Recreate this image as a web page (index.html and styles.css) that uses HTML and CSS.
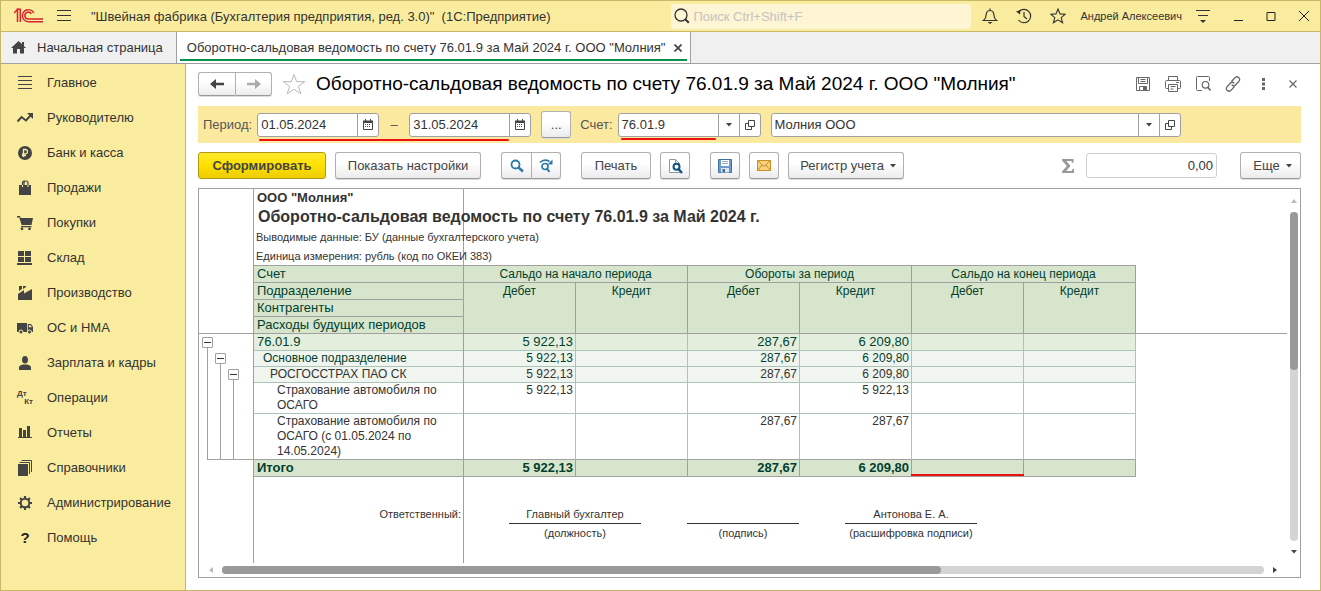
FILE: index.html
```html
<!DOCTYPE html>
<html lang="ru">
<head>
<meta charset="utf-8">
<title>Оборотно-сальдовая ведомость по счету 76.01.9</title>
<link rel="stylesheet" href="styles.css">
</head>
<body>
<svg class="defs" width="0" height="0" aria-hidden="true">
  <symbol id="calendar" viewBox="0 0 10 11"><path d="M.5 2v8.500h9V2M2.500 0v2M7.500 0v2" fill="none" stroke="#444"/><path d="M0 1.500h10V4H0z" fill="#444"/><path d="M2 5.500h6M2 7.500h6" stroke="#444" stroke-dasharray="1 1"/></symbol>
  <symbol id="open" viewBox="0 0 10 10"><path d="M3.500.5h6v6h-6zM3.500 3.500h-3v6h6v-3" fill="none" stroke="#444"/></symbol>
  <symbol id="caret" viewBox="0 0 6 4"><path d="M0 0h6L3 3.500z" fill="#444"/></symbol>
</svg>
<div class="window">
  <header class="titlebar">
    <svg class="logo" width="30" height="16" viewBox="0 0 30 16"><g fill="none" stroke="#d8232a" stroke-width="1.500"><path d="M0 5l3.500-3.500v12.500M2.500 1.200h3.800V14"/><path d="M19.800 5A6 6 0 1 0 14.500 13.700H29"/><path d="M17.300 6A3.400 3.400 0 1 0 14.500 11H29"/></g></svg>
    <button class="plain" aria-label="Меню"><svg width="14" height="12" viewBox="0 0 14 12"><path d="M0 .5h14M0 5.500h14M0 10.500h14" stroke="#333"/></svg></button>
    <span class="app-name">"Швейная фабрика (Бухгалтерия предприятия, ред. 3.0)"&nbsp; (1С:Предприятие)</span>
    <label class="search"><svg width="16" height="16" viewBox="0 0 16 16"><circle cx="7" cy="7" r="6" fill="none" stroke="#333" stroke-width="1.300"/><path d="M11.200 11.200l3.600 3.600" stroke="#333" stroke-width="2"/></svg><input type="text" aria-label="Поиск" placeholder="Поиск Ctrl+Shift+F"></label>
    <div class="title-tools">
      <button class="plain" aria-label="Оповещения"><svg width="16" height="16" viewBox="0 0 16 16"><path d="M1.500 12.500h13C12.500 11 12 9.500 11.800 6.500 11.600 3.800 10 2.500 8 2.500S4.400 3.800 4.200 6.500C4 9.500 3.500 11 1.500 12.500zM8 .5v2" fill="none" stroke="#333" stroke-width="1.200"/><path d="M5.500 14h5L8 16z" fill="#333"/></svg></button>
      <button class="plain" aria-label="История"><svg width="16" height="16" viewBox="0 0 16 16"><path d="M3 3.500A6.700 6.700 0 1 1 2.500 12M8 4v4.500l3 2.500" fill="none" stroke="#333" stroke-width="1.200"/><path d="M0 3.500l4.500-1.500-.5 4.500z" fill="#333"/></svg></button>
      <button class="plain" aria-label="Избранное"><svg width="16" height="16" viewBox="0 0 16 16"><path d="M8 1l2 4.900 5.300.3-4.100 3.400 1.400 5.200L8 11.900l-4.600 2.900 1.400-5.200L.7 6.200 6 5.900z" fill="none" stroke="#333" stroke-width="1.100"/></svg></button>
      <span class="user">Андрей Алексеевич</span>
      <button class="plain" aria-label="Настройки панели"><svg width="14" height="13" viewBox="0 0 14 13"><path d="M0 .5h14M2 5.500h10" stroke="#333"/><path d="M4 10h6l-3 3z" fill="#333"/></svg></button>
      <button class="plain win" aria-label="Свернуть"><svg width="10" height="10" viewBox="0 0 10 10"><path d="M1 9.500h9" stroke="#222"/></svg></button>
      <button class="plain win" aria-label="Развернуть"><svg width="10" height="10" viewBox="0 0 10 10"><path d="M1 1.500h8v8H1z" fill="none" stroke="#222"/></svg></button>
      <button class="plain win" aria-label="Закрыть"><svg width="10" height="10" viewBox="0 0 10 10"><path d="M0 0l10 10M10 0L0 10" stroke="#222"/></svg></button>
    </div>
  </header>
  <nav class="tabs">
    <a class="tab home" href="#"><svg width="15" height="13" viewBox="0 0 15 13"><path d="M7.500 0L11 3V1h2v4l2 2h-2v5.500H9V8H6v4.500H2V7H0z" fill="#444"/></svg>Начальная страница</a>
    <div class="tab active"><a href="#">Оборотно-сальдовая ведомость по счету 76.01.9 за Май 2024 г. ООО "Молния"</a><button class="plain" aria-label="Закрыть вкладку"><svg width="8" height="8" viewBox="0 0 8 8"><path d="M.5.5l7 7M7.500.5l-7 7" stroke="#444" stroke-width="1.700"/></svg></button></div>
  </nav>
  <div class="body">
    <nav class="sidebar">
      <a href="#"><svg viewBox="0 0 16 16"><path d="M1 1.500h14M1 5.500h14M1 9.500h14M1 13.500h14" stroke="#444"/></svg>Главное</a>
      <a href="#"><svg viewBox="0 0 16 16"><path d="M.5 11.500l4-4.500 4.500 3.500 5-5.500" fill="none" stroke="#444" stroke-width="2"/><path d="M10 3h6v6z" fill="#444"/></svg>Руководителю</a>
      <a href="#"><svg viewBox="0 0 16 16"><circle cx="8" cy="8" r="7" fill="#444"/><path d="M6.500 12V4.500h2.300a2.200 2.200 0 0 1 0 4.300H5M5 10.500h4" fill="none" stroke="#faec9e" stroke-width="1.300"/></svg>Банк и касса</a>
      <a href="#"><svg viewBox="0 0 16 16"><path d="M2 5h12v10H2z" fill="#444"/><path d="M5.500 5V3a1.800 1.800 0 0 1 3-1.500M7 5V3a2 2 0 0 1 4 0v2" fill="none" stroke="#444" stroke-width="1.200"/><path d="M5.500 5v2M11 5v2" stroke="#faec9e"/></svg>Продажи</a>
      <a href="#"><svg viewBox="0 0 16 16"><path d="M0 1h3l.6 2H16l-1.500 7H4.600L2.300 2.500H0zM4 11h10.500v1.200H4z" fill="#444"/><circle cx="5" cy="13.800" r="1.400" fill="#444"/><circle cx="12.500" cy="13.800" r="1.400" fill="#444"/></svg>Покупки</a>
      <a href="#"><svg viewBox="0 0 16 16"><path d="M1 1h6v5H1zM8 1h6v5H8zM1 7h6v5H1zM8 7h6v5H8zM0 13h15v2H0z" fill="#444"/></svg>Склад</a>
      <a href="#"><svg viewBox="0 0 16 16"><path d="M1 15V9l6-4v3.500L15 4v11zM2 1h3v3L2 6zM6 1h3v1L6 4z" fill="#444"/></svg>Производство</a>
      <a href="#"><svg viewBox="0 0 16 16"><path d="M0 3h10v9H0zM10.800 4H14l2 3v5h-5.200z" fill="#444"/><path d="M11.800 5.200h2l1 2h-3z" fill="#faec9e"/><circle cx="4" cy="12" r="2" fill="#444" stroke="#faec9e"/><circle cx="12.500" cy="12" r="2" fill="#444" stroke="#faec9e"/></svg>ОС и НМА</a>
      <a href="#"><svg viewBox="0 0 16 16"><ellipse cx="8" cy="4.800" rx="3" ry="3.800" fill="#444"/><path d="M2 15v-2.500C2 10.500 4 10 6 9.500h4c2 .5 4 1 4 3V15z" fill="#444"/></svg>Зарплата и кадры</a>
      <a href="#"><span class="dtkt" aria-hidden="true"><b>Дт</b><b>Кт</b></span>Операции</a>
      <a href="#"><svg viewBox="0 0 16 16"><path d="M2 3h3v9H2zM6 5h3v7H6zM10 1h3v11h-3zM1 12h14v1H1z" fill="#444"/></svg>Отчеты</a>
      <a href="#"><svg viewBox="0 0 16 16"><path d="M1 4h10v12H1z" fill="#444"/><path d="M2.500 2.500h10V14M4.500.5h10V12" fill="none" stroke="#444"/></svg>Справочники</a>
      <a href="#"><svg viewBox="0 0 16 16"><circle cx="8" cy="8" r="4.300" fill="none" stroke="#444" stroke-width="2"/><path d="M8 1v2.500M8 12.500V15M1 8h2.500M12.500 8H15M3.100 3.100l1.700 1.700M11.200 11.200l1.700 1.700M3.100 12.900l1.700-1.700M11.200 4.800l1.700-1.700" stroke="#444" stroke-width="2.200"/></svg>Администрирование</a>
      <a href="#"><span class="help" aria-hidden="true">?</span>Помощь</a>
    </nav>
    <main class="content">
      <div class="heading">
        <div class="btn-group nav"><button class="btn" aria-label="Назад"><svg width="14" height="10" viewBox="0 0 14 10"><path d="M0 5l6-5v3.700h8v2.600H6V10z" fill="#444"/></svg></button><button class="btn" aria-label="Вперед"><svg width="14" height="10" viewBox="0 0 14 10"><path d="M14 5L8 0v3.700H0v2.600h8V10z" fill="#aaa"/></svg></button></div>
        <button class="plain" aria-label="В избранное"><svg width="24" height="22" viewBox="0 0 24 22"><path d="M12 1.500l2.700 7.200h8l-6.300 4.700 2.400 7.400L12 16.300l-6.800 4.500 2.400-7.400L1.300 8.700h8z" fill="none" stroke="#b4b9c0"/></svg></button>
        <h1>Оборотно-сальдовая ведомость по счету 76.01.9 за Май 2024 г. ООО "Молния"</h1>
        <div class="head-tools">
          <button class="plain" aria-label="Сохранить"><svg width="16" height="16" viewBox="0 0 16 16"><path d="M1.500 1.500h13v13h-13zM3.500 1.500v6h9v-6M5.500 3.500h5M5.500 5.500h5M4.500 14.500v-4h7v4" fill="none" stroke="#666"/><path d="M8 11h3v3H8z" fill="#666"/></svg></button>
          <button class="plain" aria-label="Печать"><svg width="16" height="16" viewBox="0 0 16 16"><path d="M3.500 4.500v-4h9v4M3.500 12.500h-2q-1 0-1-1v-6q0-1 1-1h13q1 0 1 1v6q0 1-1 1h-2M3.500 8.500h9v7h-9zM5.500 10.500h5M5.500 13h3M11 6.500h3" fill="none" stroke="#666"/></svg></button>
          <button class="plain" aria-label="Просмотр"><svg width="16" height="16" viewBox="0 0 16 16"><path d="M7 14.500H2.500q-1 0-1-1v-12q0-1 1-1h11q1 0 1 1V5" fill="none" stroke="#666"/><circle cx="10.500" cy="8.800" r="3.300" fill="none" stroke="#666" stroke-width="1.200"/><path d="M12.800 11.200l2.700 3.300" stroke="#666" stroke-width="1.600"/></svg></button>
          <button class="plain" aria-label="Ссылка"><svg width="16" height="16" viewBox="0 0 16 16"><path d="M6.500 5.500l3.300-3.600a2.500 2.500 0 0 1 4.300 3.300L10.500 9a2.500 2.500 0 0 1-3.800-.3M9.500 10.500l-3.300 3.600A2.500 2.500 0 0 1 1.900 10.800L5.500 7a2.500 2.500 0 0 1 3.800.3" fill="none" stroke="#666" stroke-width="1.300"/></svg></button>
          <button class="plain" aria-label="Еще действия"><svg width="16" height="16" viewBox="0 0 16 16"><path d="M7 2h3v3H7zM7 6.500h3v3H7zM7 11h3v3H7z" fill="#666"/></svg></button>
          <button class="plain" aria-label="Закрыть"><svg width="16" height="16" viewBox="0 0 16 16"><path d="M4.500 4.500l7 7M11.500 4.500l-7 7" stroke="#666" stroke-width="1.200"/></svg></button>
        </div>
      </div>
      <div class="params">
        <label for="from">Период:</label>
        <div class="period">
          <div class="field"><input id="from" class="date" type="text" value="01.05.2024"><button aria-label="Выбрать начало"><svg width="10" height="11"><use href="#calendar"/></svg></button></div>
          <span>–</span>
          <div class="field"><input class="date" type="text" aria-label="Конец периода" value="31.05.2024"><button aria-label="Выбрать конец"><svg width="10" height="11"><use href="#calendar"/></svg></button></div>
        </div>
        <button class="btn dots">...</button>
        <label for="acc">Счет:</label>
        <div class="field account"><input id="acc" class="date" type="text" value="76.01.9"><button aria-label="Список счетов"><svg width="6" height="4"><use href="#caret"/></svg></button><button aria-label="Открыть счет"><svg width="10" height="10"><use href="#open"/></svg></button></div>
        <div class="field org"><input type="text" aria-label="Организация" value="Молния ООО"><button aria-label="Список организаций"><svg width="6" height="4"><use href="#caret"/></svg></button><button aria-label="Открыть организацию"><svg width="10" height="10"><use href="#open"/></svg></button></div>
      </div>
      <div class="toolbar">
        <button class="btn primary">Сформировать</button>
        <button class="btn settings">Показать настройки</button>
        <div class="btn-group find"><button class="btn" aria-label="Найти"><svg width="14" height="14" viewBox="0 0 14 14"><circle cx="5.500" cy="5.500" r="4" fill="none" stroke="#2e78a8" stroke-width="1.800"/><path d="M8.500 8.500l4.500 4" stroke="#2e78a8" stroke-width="2.400"/></svg></button><button class="btn" aria-label="Найти далее"><svg width="14" height="14" viewBox="0 0 14 14"><circle cx="6" cy="7.500" r="3" fill="none" stroke="#2e78a8" stroke-width="1.700"/><path d="M8 9.800l2.500 3" stroke="#2e78a8" stroke-width="2"/><path d="M1 3.500Q5-.5 10.500 2.500" fill="none" stroke="#2e78a8" stroke-width="1.700"/><path d="M13.500.5v5H8.500z" fill="#2e78a8"/></svg></button></div>
        <button class="btn print">Печать</button>
        <button class="btn icon preview" aria-label="Просмотр"><svg width="15" height="16" viewBox="0 0 15 16"><path d="M1.500 1.500h6l4 4v9h-10z" fill="#fff" stroke="#8c98a4"/><path d="M7.500 1.500v4h4" fill="none" stroke="#8c98a4"/><circle cx="8.500" cy="8.700" r="3" fill="#fff" stroke="#0e5484" stroke-width="2"/><path d="M10.500 11l3.500 4" stroke="#0e5484" stroke-width="2.400"/></svg></button>
        <button class="btn icon" aria-label="Сохранить"><svg width="14" height="14" viewBox="0 0 14 14"><path d="M.5.500h13v13H.5z" fill="#6d9bd0" stroke="#41719f"/><path d="M3 1h8v6H3z" fill="#fff"/><path d="M4 2.500h6M4 4.500h6" stroke="#9ab"/><path d="M3 9h8v4.500H3z" fill="#dfe5ea"/><path d="M4.500 10h2.500v3.500H4.500z" fill="#41719f"/></svg></button>
        <button class="btn icon" aria-label="Отправить"><svg width="14" height="11" viewBox="0 0 14 11"><path d="M.5.500h13v10H.5z" fill="#f8d27c" stroke="#c98f22"/><path d="M.5.500L7 6.500l6.500-6M.5 10.500L5 5M13.500 10.500L9 5" fill="none" stroke="#c48a26"/></svg></button>
        <button class="btn register">Регистр учета<svg width="6" height="4"><use href="#caret"/></svg></button>
        <svg class="sigma" width="12" height="14" viewBox="0 0 12 14"><path d="M0 0h11.500v3.800h-1.200L9.300 2H4.500l4 5-4.300 5h5.300l1.300-2H12v4H0v-1.500L4.800 7 0 1.500z" fill="#999"/></svg>
        <input class="sum" type="text" aria-label="Сумма" value="0,00">
        <button class="btn more">Еще<svg width="6" height="4"><use href="#caret"/></svg></button>
      </div>
      <div class="sheet">
        <div class="view">
          <table>
            <colgroup><col class="c-tree"><col class="c-name"><col class="c-num"><col class="c-num"><col class="c-num"><col class="c-num"><col class="c-num"><col class="c-num"><col></colgroup>
            <thead>
              <tr class="t-org"><td class="gut"></td><td class="fix">ООО "Молния"</td><td colspan="7"></td></tr>
              <tr class="t-title"><td class="gut"></td><td class="fix">Оборотно-сальдовая ведомость по счету 76.01.9 за Май 2024 г.</td><td colspan="7"></td></tr>
              <tr class="t-note"><td class="gut"></td><td class="fix">Выводимые данные: БУ (данные бухгалтерского учета)</td><td colspan="7"></td></tr>
              <tr class="t-note"><td class="gut"></td><td class="fix edge">Единица измерения: рубль (код по ОКЕИ 383)</td><td class="edge" colspan="6"></td><td></td></tr>
              <tr class="h"><td class="gut"></td><th>Счет</th><th colspan="2">Сальдо на начало периода</th><th colspan="2">Обороты за период</th><th colspan="2">Сальдо на конец периода</th><td></td></tr>
              <tr class="h"><td class="gut"></td><th>Подразделение</th><th rowspan="3">Дебет</th><th rowspan="3">Кредит</th><th rowspan="3">Дебет</th><th rowspan="3">Кредит</th><th rowspan="3">Дебет</th><th rowspan="3">Кредит</th><td></td></tr>
              <tr class="h"><td class="gut"></td><th>Контрагенты</th><td></td></tr>
              <tr class="h"><td class="gut edge"></td><th>Расходы будущих периодов</th><td class="edge"></td></tr>
            </thead>
            <tbody>
              <tr class="l1"><td class="gut" rowspan="5"><div class="tree"><div><button aria-label="Свернуть счет"></button></div><div><button aria-label="Свернуть подразделение"></button></div><div><button aria-label="Свернуть контрагента"></button></div></div></td><td>76.01.9</td><td>5 922,13</td><td></td><td>287,67</td><td>6 209,80</td><td></td><td></td><td></td></tr>
              <tr class="l2"><td>Основное подразделение</td><td>5 922,13</td><td></td><td>287,67</td><td>6 209,80</td><td></td><td></td><td></td></tr>
              <tr class="l3"><td>РОСГОССТРАХ ПАО СК</td><td>5 922,13</td><td></td><td>287,67</td><td>6 209,80</td><td></td><td></td><td></td></tr>
              <tr class="l4 two"><td>Страхование автомобиля по ОСАГО</td><td>5 922,13</td><td></td><td></td><td>5 922,13</td><td></td><td></td><td></td></tr>
              <tr class="l4 three"><td>Страхование автомобиля по ОСАГО (с 01.05.2024 по 14.05.2024)</td><td></td><td></td><td>287,67</td><td>287,67</td><td></td><td></td><td></td></tr>
              <tr class="total"><td class="gut"></td><td>Итого</td><td>5 922,13</td><td></td><td>287,67</td><td>6 209,80</td><td class="marked"></td><td></td><td></td></tr>
            </tbody>
            <tfoot>
              <tr class="gap"><td class="gut"></td><td class="fix"></td><td colspan="7"></td></tr>
              <tr class="sign"><td class="gut"></td><td class="fix resp">Ответственный:</td><td colspan="7"><div class="signs"><div><b>Главный бухгалтер</b><span>(должность)</span></div><div class="short"><b></b><span>(подпись)</span></div><div><b>Антонова Е. А.</b><span>(расшифровка подписи)</span></div></div></td></tr>
            </tfoot>
          </table>
          <div class="rest"><div class="c-tree"></div><div class="c-name"></div></div>
        </div>
        <div class="vscroll"><svg width="6" height="4" viewBox="0 0 6 4"><path d="M0 4h6L3 0z" fill="#bbb"/></svg><div class="track"><div class="thumb"></div></div><svg width="6" height="4"><use href="#caret"/></svg></div>
        <div class="hscroll"><svg width="4" height="6" viewBox="0 0 4 6"><path d="M4 0v6L0 3z" fill="#bbb"/></svg><div class="track"><div class="thumb"></div></div><svg width="4" height="6" viewBox="0 0 4 6"><path d="M0 0v6l4-3z" fill="#444"/></svg></div>
      </div>
    </main>
  </div>
</div>
</body>
</html>
```
FILE: styles.css
```css
* { box-sizing: border-box; }
body { margin: 0; font: 13px/15px "Liberation Sans", Arial, sans-serif; color: #333; }
button, input { font: inherit; color: inherit; margin: 0; padding: 0; }
a { color: inherit; text-decoration: none; }
svg { display: block; flex: none; }
.defs { position: absolute; }
.plain { border: 0; background: none; display: flex; flex: none; }
.window { height: 100vh; display: flex; flex-direction: column; border: 1px solid #c8b866; background: #fff; }

.titlebar { display: flex; align-items: center; flex: none; height: 31px; padding: 0 11px 0 13px; background: #faec9e; border-bottom: 1px solid #c8b866; white-space: nowrap; }
.logo { margin-right: 13px; }
.app-name { margin-left: 20px; }
.search { display: flex; align-items: center; flex: none; gap: 3px; width: 300px; height: 25px; margin-left: auto; padding-left: 3px; background: #fdf5d3; border-radius: 3px; }
.search input { flex: 1; min-width: 0; border: 0; background: none; outline: 0; }
.search input::placeholder { color: #c6c2c2; opacity: 1; }
.title-tools { display: flex; align-items: center; gap: 18px; margin-left: 11px; }
.user { font-size: 11px; margin: 0 -4px; }
.win { margin-left: 5px; }

.tabs { display: flex; flex: none; height: 32px; background: #f0f0f0; border-bottom: 1px solid #a0a0a0; white-space: nowrap; }
.tab { display: flex; align-items: center; border-right: 1px solid #a0a0a0; }
.home { gap: 11px; padding: 0 13px 0 10px; }
.active { position: relative; gap: 9px; padding: 0 8px 0 10px; background: #fff; }
.active::after { content: ""; position: absolute; left: 3px; right: 3px; bottom: 2px; height: 2px; background: #0a9150; }

.body { display: flex; flex: 1; min-height: 0; }
.sidebar { flex: none; width: 185px; padding-top: 1px; background: #faec9e; border-right: 1px solid #c8b866; }
.sidebar a { display: flex; align-items: center; gap: 14px; height: 35px; padding-left: 16px; }
.sidebar svg { width: 16px; height: 16px; }
.dtkt { display: flex; flex-direction: column; width: 16px; font-size: 8px; line-height: 8px; color: #444; }
.dtkt b + b { align-self: flex-end; }
.help { width: 16px; text-align: center; font-size: 15px; font-weight: bold; color: #222; }

.content { flex: 1; min-width: 0; display: flex; flex-direction: column; padding: 8px 19px 12px 12px; }
.heading { display: flex; align-items: center; flex: none; height: 24px; gap: 10px; margin-bottom: 10px; }
h1 { margin: 0; font-size: 19px; line-height: 24px; font-weight: normal; color: #000; white-space: nowrap; }
.head-tools { display: flex; gap: 14px; margin-left: auto; }
.btn { display: flex; align-items: center; justify-content: center; flex: none; height: 27px; border: 1px solid #b0b0b0; border-bottom-color: #999; border-radius: 3px; background: linear-gradient(#fff 40%, #ececec); color: #444; box-shadow: 0 1px 0 #ddd; white-space: nowrap; }
.btn-group { display: flex; flex: none; }
.btn-group .btn:first-child { border-radius: 3px 0 0 3px; border-right: 0; }
.btn-group .btn:last-child { border-radius: 0 3px 3px 0; }
.nav .btn { width: 37px; height: 24px; }

.params { display: flex; align-items: center; flex: none; height: 37px; padding: 0 120px 0 5px; background: #fce9a0; color: #555; }
.params > label { margin-right: 5px; }
.period { position: relative; display: flex; align-items: center; }
.period > span { width: 30px; text-align: center; }
.period::after, .account::after { content: ""; position: absolute; left: 2px; right: 22px; bottom: -4px; height: 2px; background: #e11; border-radius: 1px; }
.account { position: relative; }
.account::after { right: 44px; }
.field { display: flex; height: 24px; border: 1px solid #a0a0a0; border-radius: 3px; background: #fff; color: #333; }
.field input { border: 0; background: none; padding: 0 3px; min-width: 0; flex: 1; outline: 0; }
.field .date { flex: none; width: 99px; }
.field button { display: flex; align-items: center; justify-content: center; width: 21px; border: 0; border-left: 1px solid #a0a0a0; background: none; }
.dots { width: 30px; margin: 0 9px 0 10px; }
.org { flex: 1; max-width: 410px; margin-left: 10px; }

.toolbar { display: flex; align-items: center; flex: none; gap: 9px; margin: 9px 0; }
.primary { width: 128px; font-weight: bold; background: linear-gradient(#ffe92e, #ffe000 50%, #eccc00); border-color: #b09a10; box-shadow: none; }
.settings { width: 146px; }
.find { margin: 0 11px; }
.find .btn { width: 30px; }
.print { width: 70px; }
.icon { width: 30px; }
.preview { margin-right: 11px; }
.register { width: 116px; gap: 6px; padding-left: 4px; }
.sigma { margin-left: auto; }
.sum { width: 131px; height: 25px; margin: 0 14px 0 3px; padding-right: 3px; text-align: right; border: 1px solid #d0d0d0; border-radius: 3px; }
.more { width: 61px; gap: 6px; padding-left: 4px; }

.sheet { flex: 1; min-height: 0; display: grid; grid-template: minmax(0, 1fr) 14px / minmax(0, 1fr) 13px; border: 1px solid #a0a0a0; }
.view { display: flex; flex-direction: column; overflow: hidden; }
table { flex: none; width: 100%; table-layout: fixed; border-spacing: 0; font-size: 12px; }
.rest { flex: 1; display: flex; }
.rest div { border-right: 1px solid #a0a0a0; }
.c-tree { width: 55px; }
.c-name { width: 210px; }
.c-num { width: 112px; }
th, td { padding: 0; vertical-align: top; font-weight: normal; text-align: left; }
.gut, .fix { border-right: 1px solid #a0a0a0; }
.edge { border-bottom: 1px solid #a0a0a0; }
.fix { white-space: nowrap; }
.t-org { height: 17px; font-size: 13px; line-height: 17px; }
.t-title { height: 22px; font-size: 16px; line-height: 22px; }
.t-title td, .t-org td { font-weight: bold; }
.t-note { height: 19px; font-size: 11px; line-height: 18px; }
.t-org .fix { padding-left: 3px; }
.t-title .fix { padding-left: 4px; }
.t-note .fix { padding-left: 2px; }
.h { height: 17px; line-height: 16px; }
.h th { background: #d7e5cc; color: #003f2f; border: solid #a0a0a0; border-width: 0 1px 1px 0; text-align: center; }
.h th:nth-child(2) { text-align: left; font-size: 13px; padding-left: 3px; }
tbody td { text-align: right; padding-right: 2px; border: solid #abc4b8; border-width: 0 1px 1px 0; line-height: 15px; }
tbody td:last-child { border: 0; }
tbody .gut { padding: 0; border-width: 0 1px 0 0; border-color: #a0a0a0; }
.l1 { height: 17px; font-size: 13px; }
.l1 td, .total td { line-height: 16px; }
.l2, .l3 { height: 16px; }
.l1 td { background: #e3efdc; color: #003f2f; }
.l2 td, .l3 td { background: #f0f5ef; }
.l2 td { color: #003f2f; }
.l1 .gut, .l1 td:last-child, .l2 td:last-child, .l3 td:last-child { background: none; }
.l1 td:nth-child(2), .l2 td:first-child, .l3 td:first-child, .l4 td:first-child, .total td:nth-child(2) { text-align: left; border-right-color: #a0a0a0; }
.l1 td:nth-child(2), .total td:nth-child(2) { padding-left: 3px; }
.l2 td:first-child { padding-left: 9px; }
.l3 td:first-child { padding-left: 16px; }
.l4 td:first-child { padding: 0 10px 0 23px; }
.two { height: 31px; }
.three { height: 46px; }
.three td { border-bottom-color: #a0a0a0; }
.total { height: 17px; font-size: 13px; }
.total td { background: #d7e5cc; color: #003f2f; font-weight: bold; border-color: #a0a0a0; }
.total .gut, .total td:last-child { background: none; }
.marked { position: relative; }
.marked::after { content: ""; position: absolute; left: -1px; right: -1px; bottom: 0; height: 2px; background: #e11; }
.tree { display: flex; height: 126px; margin-left: 8px; border-bottom: 1px solid #a0a0a0; }
.tree div { display: flex; flex-direction: column; width: 13px; padding-top: 3px; }
.tree div + div { padding-top: 19px; }
.tree div + div + div { padding-top: 35px; }
.tree div::after { content: ""; flex: 1; border-left: 1px solid #a0a0a0; }
.tree button { width: 11px; height: 11px; margin-left: -5px; border: 1px solid #a0a0a0; border-radius: 1px; background: linear-gradient(#333, #333) center / 7px 1px no-repeat #fff; }
.gap { height: 28px; }
.sign { height: 38px; font-size: 11px; line-height: 18px; }
.resp { text-align: right; padding-right: 2px; }
.signs { display: flex; gap: 46px; padding-left: 45px; }
.signs div { display: flex; flex-direction: column; width: 132px; text-align: center; white-space: nowrap; }
.signs .short { width: 112px; }
.signs b { font-weight: normal; height: 19px; border-bottom: 1px solid #333; }
.signs span { line-height: 19px; }
.track { flex: 1; background: #d4d4d4; border-radius: 4px; }
.thumb { background: #999; border-radius: 4px; }
.vscroll { display: flex; flex-direction: column; align-items: center; gap: 9px; padding: 10px 0 9px; }
.vscroll .track { width: 8px; }
.vscroll .thumb { height: 48%; }
.hscroll { display: flex; align-items: center; gap: 9px; padding: 0 10px; }
.hscroll .track { height: 8px; }
.hscroll .thumb { width: 69%; height: 8px; }
```
